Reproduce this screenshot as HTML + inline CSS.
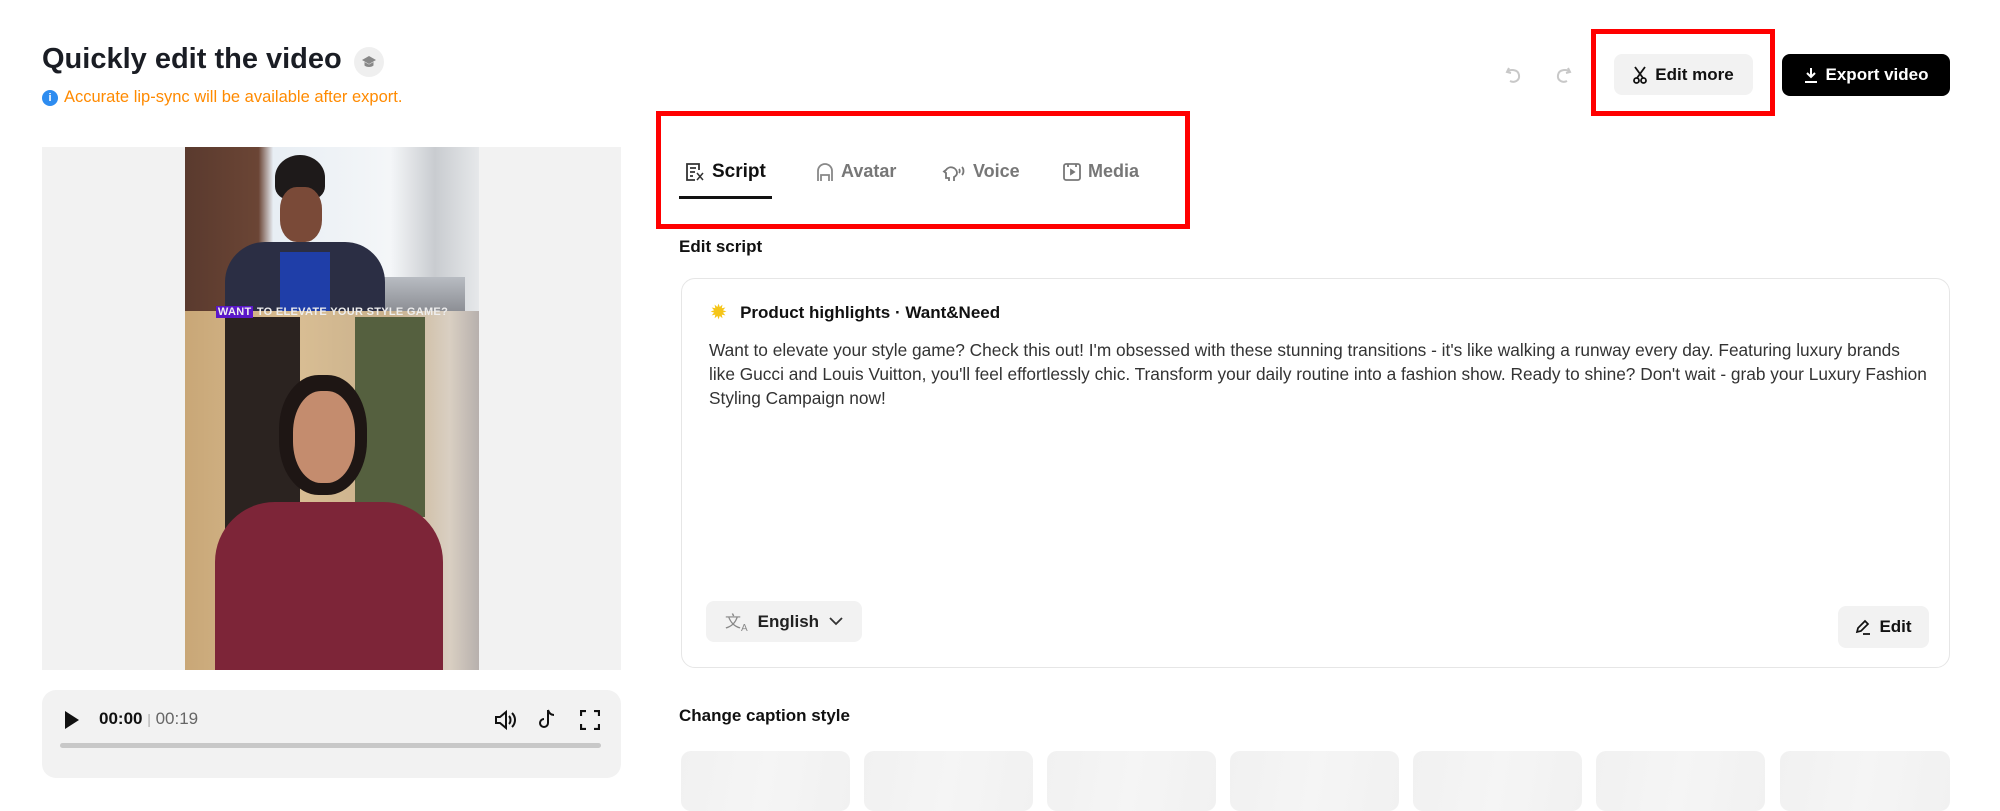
<!DOCTYPE html>
<html><head><meta charset="utf-8"><style>
*{box-sizing:border-box;margin:0;padding:0}
body{width:2000px;height:801px;overflow:hidden;background:#fff;font-family:"Liberation Sans",Arial,sans-serif;color:#111;position:relative}
.a{position:absolute}
.btn{position:absolute;border-radius:8px;display:flex;align-items:center;justify-content:center;font-weight:bold;font-size:17px}
.tab{position:absolute;top:161px;font-size:18px;font-weight:bold;color:#777;display:flex;align-items:center;gap:7px}
.tile{position:absolute;top:751px;width:169px;height:60px;border-radius:10px;background:linear-gradient(100deg,#f1f1f1,#f5f5f5 50%,#f1f1f1)}
.red{position:absolute;border:5px solid #f00}
</style></head><body>
<div class="a" style="left:42px;top:43px;font-size:29px;font-weight:bold;color:#1a1d24">Quickly edit the video</div>
<div class="a" style="left:354px;top:47px;width:30px;height:30px;border-radius:50%;background:#efefef;display:flex;align-items:center;justify-content:center">
<svg width="16" height="14" viewBox="0 0 16 14"><path d="M8 1L1 5l7 4 7-4z" fill="#888"/><path d="M3.5 7v3.5c2 2 7 2 9 0V7L8 9.5z" fill="#888"/></svg></div>
<div class="a" style="left:42px;top:88px;display:flex;align-items:center;gap:6px;font-size:16.5px;color:#ff8a00">
<span style="width:16px;height:16px;border-radius:50%;background:#2d8cf0;color:#fff;font-size:11px;font-weight:bold;display:flex;align-items:center;justify-content:center">i</span>Accurate lip-sync will be available after export.</div>

<!-- video -->
<div class="a" style="left:42px;top:147px;width:579px;height:523px;background:#f2f2f2"></div>
<div class="a" style="left:185px;top:147px;width:294px;height:523px;overflow:hidden;background:#d9c3a0">
 <div class="a" style="left:0;top:0;width:294px;height:164px;background:linear-gradient(90deg,#5a3a2e 0,#6b4535 25%,#e8eef4 30%,#f4f6f8 70%,#c9ccd0 85%,#e6e8ea 100%)"></div>
 <div class="a" style="left:130px;top:130px;width:150px;height:34px;background:linear-gradient(#b8bcc2,#8d8f95)"></div>
 <div class="a" style="left:90px;top:8px;width:50px;height:45px;border-radius:50% 50% 30% 30%;background:#1e1a1a"></div>
 <div class="a" style="left:95px;top:40px;width:42px;height:55px;border-radius:40%;background:#7a4a38"></div>
 <div class="a" style="left:40px;top:95px;width:160px;height:69px;border-radius:40px 40px 0 0;background:#2b2e44"></div>
 <div class="a" style="left:95px;top:105px;width:50px;height:59px;background:#1f3ea8"></div>
 <div class="a" style="left:0;top:164px;width:294px;height:360px;background:linear-gradient(90deg,#c9a777,#d8bd93 40%,#c8b08c 70%,#d9cfc2 90%,#b7b0ad)"></div>
 <div class="a" style="left:40px;top:170px;width:75px;height:250px;background:#2b2320"></div>
 <div class="a" style="left:170px;top:170px;width:70px;height:200px;background:#55603f"></div>
 <div class="a" style="left:94px;top:228px;width:88px;height:120px;border-radius:45%;background:#1e1614"></div>
 <div class="a" style="left:108px;top:244px;width:62px;height:92px;border-radius:45%;background:#c48c6e"></div>
 <div class="a" style="left:30px;top:355px;width:228px;height:170px;border-radius:60px 60px 0 0;background:#7d2538"></div>
 <div class="a" style="left:0;top:158px;width:294px;height:14px;display:flex;justify-content:center;align-items:center;font-size:11px;font-weight:bold;color:#eee;letter-spacing:.3px;white-space:nowrap"><span style="background:#5a17c9;padding:0 2px">WANT</span>&nbsp;TO ELEVATE YOUR STYLE GAME?</div>
</div>
<!-- controls -->
<div class="a" style="left:42px;top:690px;width:579px;height:88px;background:#f2f2f2;border-radius:14px"></div>
<svg class="a" style="left:64px;top:710px" width="16" height="20"><path d="M1 1l14 9-14 9z" fill="#111"/></svg>
<div class="a" style="left:99px;top:709px;font-size:17px;font-weight:bold">00:00 <span style="color:#aaa;font-weight:normal;font-size:14px">|</span> <span style="color:#666;font-weight:normal">00:19</span></div>
<svg class="a" style="left:494px;top:709px" width="24" height="22" viewBox="0 0 24 22" fill="none" stroke="#111" stroke-width="2"><path d="M2 8h4l6-5v16l-6-5H2z"/><path d="M15 7c2 2 2 6 0 8M18 4c4 4 4 10 0 14"/></svg>
<svg class="a" style="left:538px;top:708px" width="20" height="22" viewBox="0 0 20 22" fill="none" stroke="#111" stroke-width="2"><path d="M10 2v13a4 4 0 1 1-4-4M10 2c1 3 3 5 6 5"/></svg>
<svg class="a" style="left:580px;top:710px" width="20" height="20" fill="none" stroke="#111" stroke-width="2.2"><path d="M1 6V1h5M14 1h5v5M19 14v5h-5M6 19H1v-5"/></svg>
<div class="a" style="left:60px;top:743px;width:541px;height:5px;border-radius:3px;background:#c8c8c8"></div>

<!-- top right -->
<svg class="a" style="left:1505px;top:66px" width="18" height="18" fill="none" stroke="#c8c8c8" stroke-width="2"><path d="M4 2L2 6l4 1M2 6c3-3 11-3 12 3s-5 8-9 6"/></svg>
<svg class="a" style="left:1554px;top:66px" width="18" height="18" fill="none" stroke="#c8c8c8" stroke-width="2"><path d="M14 2l2 4-4 1M16 6c-3-3-11-3-12 3s5 8 9 6"/></svg>
<div class="btn" style="left:1614px;top:54px;width:139px;height:41px;background:#f2f2f2;gap:8px">
<svg width="14" height="18" viewBox="0 0 14 18" fill="none" stroke="#111" stroke-width="1.8"><path d="M2 1l8 11M12 1L4 12"/><circle cx="3.5" cy="14.5" r="2.5"/><circle cx="10.5" cy="14.5" r="2.5"/></svg>Edit more</div>
<div class="btn" style="left:1782px;top:54px;width:168px;height:42px;background:#000;color:#fff;gap:8px">
<svg width="14" height="16" fill="none" stroke="#fff" stroke-width="2"><path d="M7 1v9M3 6l4 4 4-4M1 15h12"/></svg>Export video</div>
<div class="red" style="left:1591px;top:29px;width:184px;height:87px"></div>

<!-- tabs -->
<div class="tab" style="left:685px;color:#111;font-size:19px"><svg width="20" height="20" viewBox="0 0 20 20" fill="none" stroke="#333" stroke-width="1.8"><path d="M14 8V2H2v16h8M5 6h6M5 10h5M5 14h3"/><path d="M12 11l6 7M18 11l-6 7" stroke-width="1.5"/></svg>Script</div>
<div class="a" style="left:679px;top:196px;width:93px;height:3px;background:#111"></div>
<div class="tab" style="left:816px"><svg width="18" height="20" fill="none" stroke="#888" stroke-width="1.8"><path d="M2 19V9a7 7 0 0 1 14 0v10"/><path d="M5 19v-6h8v6"/></svg>Avatar</div>
<div class="tab" style="left:942px"><svg width="24" height="20" fill="none" stroke="#777" stroke-width="1.8"><path d="M7 19v-3H4V11L2 9.5 4 8a6 6 0 0 1 11 3c0 2-1 3-3 4v4"/><path d="M17 7c1 1 1 3 0 4M20 5c2 2 2 6 0 8"/></svg>Voice</div>
<div class="tab" style="left:1063px"><svg width="18" height="20" fill="none" stroke="#777" stroke-width="1.8"><rect x="1" y="2" width="16" height="16" rx="2"/><path d="M5 2v3M13 2v3"/><path d="M8 8l3 2-3 2z" fill="#777"/></svg>Media</div>
<div class="red" style="left:656px;top:111px;width:534px;height:118px"></div>

<div class="a" style="left:679px;top:237px;font-size:17px;font-weight:bold">Edit script</div>
<div class="a" style="left:681px;top:278px;width:1269px;height:390px;border:1.5px solid #e6e6e6;border-radius:14px"></div>
<div class="a" style="left:711px;top:302px;display:flex;align-items:center;gap:14px;font-size:17px;font-weight:bold"><span style="color:#f5c518;font-size:18px">✹</span>Product highlights · Want&amp;Need</div>
<div class="a" style="left:709px;top:338px;white-space:nowrap;font-size:17.3px;line-height:24px;color:#333">Want to elevate your style game? Check this out! I'm obsessed with these stunning transitions - it's like walking a runway every day. Featuring luxury brands<br>like Gucci and Louis Vuitton, you'll feel effortlessly chic. Transform your daily routine into a fashion show. Ready to shine? Don't wait - grab your Luxury Fashion<br>Styling Campaign now!</div>
<div class="btn" style="left:706px;top:601px;width:156px;height:41px;background:#f2f2f2;font-size:17px;gap:10px;font-weight:bold;color:#222">
<span style="color:#888;font-size:16px;font-weight:normal">文<sub style="font-size:10px">A</sub></span>English <svg width="14" height="9" fill="none" stroke="#333" stroke-width="1.8"><path d="M1 1l6 6 6-6"/></svg></div>
<div class="btn" style="left:1838px;top:606px;width:91px;height:42px;background:#f2f2f2;gap:8px">
<svg width="16" height="16" fill="none" stroke="#111" stroke-width="1.7"><path d="M2 13l1-4 7-7 3 3-7 7zM8 15h7"/></svg>Edit</div>

<div class="a" style="left:679px;top:706px;font-size:17px;font-weight:bold">Change caption style</div>
<div class="tile" style="left:681px"></div><div class="tile" style="left:864px"></div><div class="tile" style="left:1047px"></div><div class="tile" style="left:1230px"></div><div class="tile" style="left:1413px"></div><div class="tile" style="left:1596px"></div><div class="tile" style="left:1780px;width:170px"></div>
</body></html>
